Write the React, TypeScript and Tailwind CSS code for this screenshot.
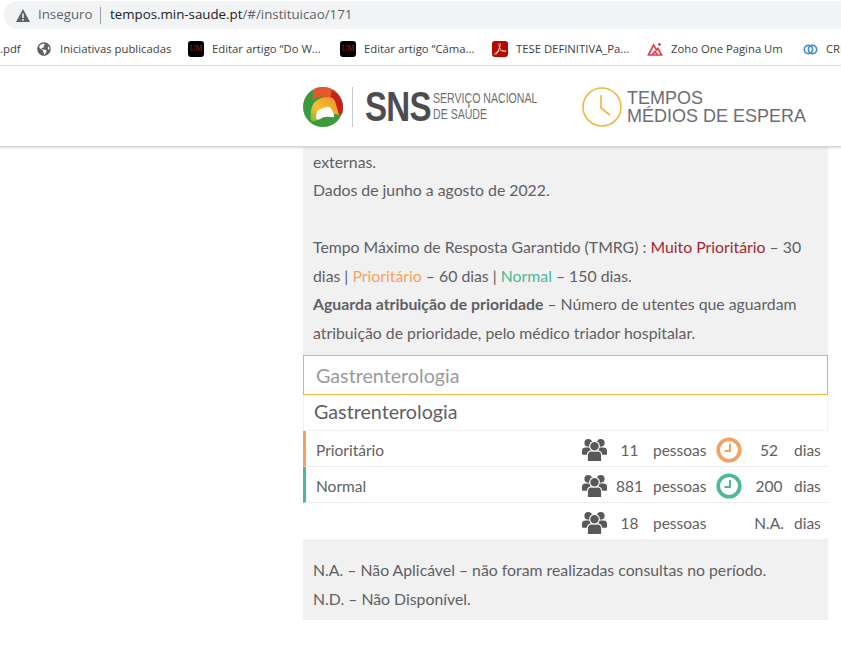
import { FaGlobeAmericas } from 'react-icons/fa';
import { SiAdobeacrobatreader } from 'react-icons/si';

const textFont = "font-['Lato','Open_Sans',sans-serif]";

function UmIcon() {
  return (
    <div className="w-4 h-4 rounded-[3px] bg-black flex items-center justify-center text-[8px] leading-none text-[#a31d1d] font-['Liberation_Serif',serif]">
      UM
    </div>
  );
}

function ZohoIcon() {
  return (
    <svg width="16" height="16" viewBox="0 0 16 16" fill="none" stroke="#d9434e" strokeWidth="1.7">
      <path d="M1.5 14 L6.5 4 L9.5 9 L11 7.5 L14.5 14 Z" />
      <path d="M5 14 L8 10.5 L10.5 14" />
      <circle cx="12.5" cy="3.5" r="1.4" fill="#d9434e" stroke="none" />
    </svg>
  );
}

function CrmIcon() {
  return (
    <svg width="15" height="15" viewBox="0 0 16 16" fill="none" stroke="#3f8fc9" strokeWidth="1.8">
      <circle cx="5.8" cy="8" r="4.4" />
      <circle cx="10.2" cy="8" r="4.4" />
    </svg>
  );
}

function Bookmark({ icon, label, width }: { icon: React.ReactNode; label: string; width: string }) {
  return (
    <div className="flex items-center gap-2 shrink-0">
      <div className="w-4 flex justify-center">{icon}</div>
      <span className={`${width} whitespace-nowrap text-[11.3px] text-[#3c4043] font-['Open_Sans',sans-serif]`}>{label}</span>
    </div>
  );
}

function Clock({ color }: { color: string }) {
  return (
    <svg width="26" height="26" viewBox="0 0 26 26" fill="none" stroke={color}>
      <circle cx="13" cy="13" r="10.8" strokeWidth="3.6" />
      <path d="M14 7 V14 H8.5" strokeWidth="2" />
    </svg>
  );
}

function People() {
  return (
    <svg width="25" height="24" viewBox="0 0 26 24" fill="#58595b" stroke="#ffffff" strokeWidth="1.2" className="shrink-0 mt-[3px]">
      <circle cx="6.5" cy="4.5" r="4" stroke="none" />
      <circle cx="19.5" cy="4.5" r="4" stroke="none" />
      <path d="M0 16 V13 Q0 9.5 4 9.5 H9 V17 H1 Q0 17 0 16 Z" stroke="none" />
      <path d="M26 16 V13 Q26 9.5 22 9.5 H17 V17 H25 Q26 17 26 16 Z" stroke="none" />
      <path d="M5.5 24 V18 Q5.5 13 10 13 H16 Q20.5 13 20.5 18 V24 Z" />
      <circle cx="13" cy="8" r="5" />
    </svg>
  );
}

function Row({ border, label, count, clock, days, divider }: { border: string; label: string; count: string; clock?: string; days: string; divider: boolean }) {
  return (
    <div className={`${divider ? 'h-9 border-b border-[#eeeeee]' : 'h-9'} flex items-center text-[15.5px] text-[#5f6062] ${border}`}>
      <span className="flex-1 pl-[10px] pt-[5px]">{label}</span>
      <People />
      <span className="w-[45px] pt-[5px] text-center">{count}</span>
      <span className="w-[56px] pl-[1px] pt-[5px]">pessoas</span>
      <div className="w-[26px] ml-[8px] pt-[3px] flex justify-center">{clock && <Clock color={clock} />}</div>
      <span className="w-[52px] pt-[5px] pl-[2px] text-center">{days}</span>
      <span className="w-[34px] pt-[5px]">dias</span>
    </div>
  );
}

export default function App() {
  return (
    <div className="w-[841px] h-[649px] overflow-hidden bg-white">
      {/* browser chrome */}
      <div className="h-[33px] pl-1 pt-[1px] bg-white">
        <div className="h-[28px] rounded-l-full bg-[#f1f3f4] flex items-center pl-3 text-[13.3px] font-['Open_Sans',sans-serif]">
          <svg width="14" height="13" viewBox="0 0 14 13" className="mr-[8px]">
            <path d="M7 0 L14 13 H0 Z" fill="#5f6368" />
            <rect x="6.2" y="4.5" width="1.6" height="4.5" fill="#f1f3f4" />
            <rect x="6.2" y="10" width="1.6" height="1.6" fill="#f1f3f4" />
          </svg>
          <span className="text-[#5f6368] w-[62px]">Inseguro</span>
          <div className="w-px h-[17px] bg-[#9aa0a6] mr-[9px]" />
          <span className="text-[#202124]">tempos.min-saude.pt</span>
          <span className="text-[#5f6368]">/#/instituicao/171</span>
        </div>
      </div>
      <div className="h-[32px] border-b border-[#dadce0] box-content flex items-center gap-[9px] whitespace-nowrap overflow-hidden">
        <span className="w-[27px] shrink-0 text-[11.3px] text-[#3c4043] font-['Open_Sans',sans-serif]">.pdf</span>
        <Bookmark icon={<FaGlobeAmericas className="w-[14px] h-[14px] text-[#5f6368]" />} label="Iniciativas publicadas" width="w-[119px]" />
        <Bookmark icon={<UmIcon />} label={'Editar artigo “Do W...'} width="w-[119px]" />
        <Bookmark icon={<UmIcon />} label={'Editar artigo “Câma...'} width="w-[119px]" />
        <Bookmark icon={<div className="w-4 h-4 rounded-[3px] bg-[#b30b00] flex items-center justify-center"><SiAdobeacrobatreader className="w-3 h-3 text-white" /></div>} label="TESE DEFINITIVA_Pa..." width="w-[122px]" />
        <Bookmark icon={<ZohoIcon />} label="Zoho One Pagina Um" width="w-[122px]" />
        <Bookmark icon={<CrmIcon />} label="CRM" width="w-[24px]" />
      </div>

      {/* site header */}
      <header className="relative z-10 h-[81px] bg-white border-b border-[#d4d4d4] shadow-[0_1px_2px_rgba(0,0,0,0.15)] flex items-center pl-[303px] pt-[1px] font-['Liberation_Sans',sans-serif] text-[#58595b]">
        <svg width="40" height="40" viewBox="0 0 40 40" className="shrink-0">
          <defs>
            <linearGradient id="swirl" x1="0" y1="1" x2="1" y2="0">
              <stop offset="0" stopColor="#8db33a" />
              <stop offset="0.4" stopColor="#f2c230" />
              <stop offset="1" stopColor="#ef8a2a" />
            </linearGradient>
          </defs>
          <circle cx="20" cy="20" r="20" fill="#3b9a3c" />
          <path d="M11 2 A20 20 0 0 1 33 5 L39 14 L28 13 Q18 6 9 13 Z" fill="#e4572a" />
          <path d="M29 3 A20 20 0 0 1 39 27 L34 28 L27 12 Z" fill="#c9201f" />
          <path d="M8 33 Q5 11 25 10 Q30 10 32 14 L36 28 Q24 24 15 32 Q10 36 8 33 Z" fill="url(#swirl)" />
          <path d="M13 30 Q13 22 23 20 Q27 19 29 23 L31 28 Q32 31 28 30 Q21 29 17 32 Q13 34 13 30 Z" fill="#ffffff" />
        </svg>
        <div className="w-px h-10 bg-[#c9c9c9] ml-[9px] mr-[12px]" />
        <span className="w-[68px] text-[43px] leading-none font-bold tracking-[-1px] text-[#4d4d4f] origin-left scale-x-[0.77]">SNS</span>
        <div className="w-[149px] -mt-[2px] text-[15px] leading-[16px] text-[#6d6e71] origin-left scale-x-[0.705] whitespace-nowrap">
          <div>SERVIÇO NACIONAL</div>
          <div>DE SAÚDE</div>
        </div>
        <svg width="40" height="40" viewBox="0 0 40 40" fill="none" stroke="#f0b73f" className="shrink-0">
          <circle cx="20" cy="20" r="19" strokeWidth="1.6" />
          <path d="M19 8 V21 L28 28" strokeWidth="1.6" />
        </svg>
        <div className="ml-[5px] text-[18px] leading-[18px] text-[#6d6e71] whitespace-nowrap">
          <div>TEMPOS</div>
          <div>MÉDIOS DE ESPERA</div>
        </div>
      </header>

      {/* page body */}
      <main className={`pl-[303px] pr-[13px] ${textFont}`}>
        <div className="h-[208px] bg-[#f1f1f1] overflow-hidden flex flex-col justify-end pl-[10px] pr-2 pb-[8px] text-[15.8px] leading-[28.5px] text-[#5f6062]">
          <p>externas.</p>
          <p>Dados de junho a agosto de 2022.</p>
          <p>&nbsp;</p>
          <p>
            Tempo Máximo de Resposta Garantido (TMRG) : <span className="text-[#a5282e]">Muito Prioritário</span> – 30 dias | <span className="text-[#f4a261]">Prioritário</span> – 60 dias | <span className="text-[#4db896]">Normal</span> – 150 dias.
          </p>
          <p>
            <strong className="font-bold">Aguarda atribuição de prioridade</strong> – Número de utentes que aguardam atribuição de prioridade, pelo médico triador hospitalar.
          </p>
        </div>
        <div className="h-10 border border-[#efb440] flex items-center pl-3 pt-[2px] text-[19.7px] text-[#9a9a9a]">Gastrenterologia</div>
        <div className="h-9 border-x border-b border-[#f1f1f1] flex items-center pl-[10px] pb-[2px] text-[19.7px] text-[#5f6062]">Gastrenterologia</div>
        <Row border="border-l-[3px] border-l-[#f4a261]" label="Prioritário" count="11" clock="#f4a261" days="52" divider />
        <Row border="border-l-[3px] border-l-[#4db896]" label="Normal" count="881" clock="#4db896" days="200" divider />
        <Row border="pl-[3px]" label="" count="18" days="N.A." divider={false} />
        <div className="h-[81px] bg-[#f1f1f1] pt-[17px] pl-[10px] text-[15.8px] leading-[28.5px] text-[#5f6062]">
          <p>N.A. – Não Aplicável – não foram realizadas consultas no período.</p>
          <p>N.D. – Não Disponível.</p>
        </div>
      </main>
    </div>
  );
}
